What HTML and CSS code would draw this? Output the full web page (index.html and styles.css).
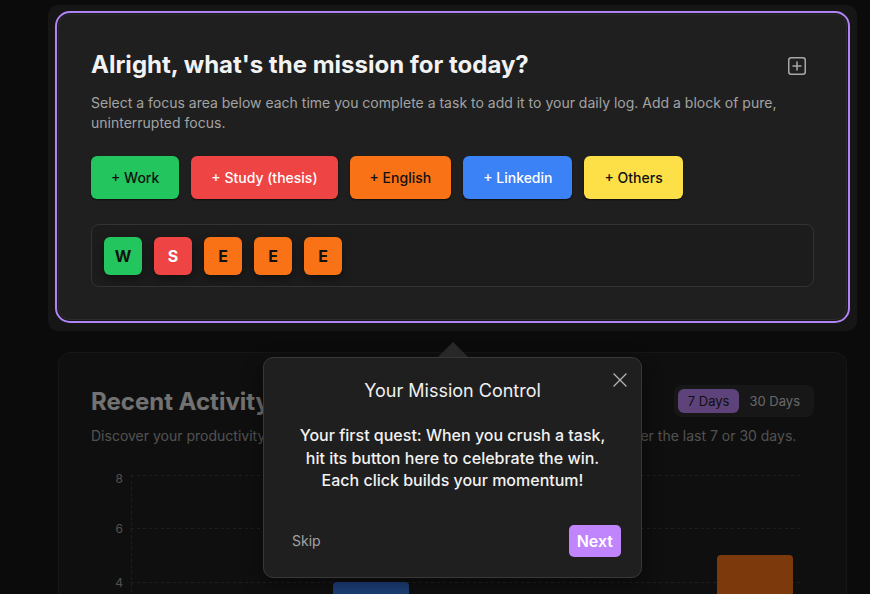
FILE: index.html
```html
<!DOCTYPE html>
<html lang="en">
<head>
<meta charset="utf-8">
<title>Focus Log</title>
<link rel="stylesheet" href="styles.css">
</head>
<body>
<main class="page">
  <div class="tour-stage">
    <section class="card mission">
      <header class="card-head">
        <h1 class="card-title">Alright, what's the mission for today?</h1>
        <button class="icon-btn" aria-label="Add focus block">
          <svg width="18" height="18" viewBox="0 0 18 18" fill="none" stroke="#a8a8a8" stroke-width="1.5" stroke-linecap="round">
            <rect x="0.75" y="0.75" width="16.5" height="16.5" rx="2.5"/>
            <path d="M9 5v8M5 9h8"/>
          </svg>
        </button>
      </header>
      <p class="card-desc">Select a focus area below each time you complete a task to add it to your daily log. Add a block of pure, uninterrupted focus.</p>
      <div class="focus-buttons">
        <button class="focus-btn green">+ Work</button>
        <button class="focus-btn red">+ Study (thesis)</button>
        <button class="focus-btn orange">+ English</button>
        <button class="focus-btn blue">+ Linkedin</button>
        <button class="focus-btn yellow">+ Others</button>
      </div>
      <div class="daily-log">
        <span class="chip green">W</span>
        <span class="chip red">S</span>
        <span class="chip orange">E</span>
        <span class="chip orange">E</span>
        <span class="chip orange">E</span>
      </div>
    </section>
  </div>

  <section class="card activity">
    <header class="card-head">
      <h2 class="card-title">Recent Activity</h2>
      <div class="range-toggle">
        <button class="range-btn active">7 Days</button>
        <button class="range-btn">30 Days</button>
      </div>
    </header>
    <p class="card-desc">Discover your productivity rhythm and see how your focus areas have added up over the last 7 or 30 days.</p>
    <svg class="chart" width="723" height="140" viewBox="0 0 723 140">
      <g class="grid" stroke="#3e3e3e" stroke-width="1" stroke-dasharray="3 3">
        <line x1="40" y1="9.5" x2="712" y2="9.5"/>
        <line x1="40" y1="62.5" x2="712" y2="62.5"/>
        <line x1="40" y1="116.5" x2="712" y2="116.5"/>
        <line x1="40.5" y1="9" x2="40.5" y2="140"/>
      </g>
      <g class="axis-labels" fill="#a3a3a3" font-size="12" text-anchor="end">
        <text x="32" y="17">8</text>
        <text x="32" y="67">6</text>
        <text x="32" y="121">4</text>
      </g>
      <path d="M242 120a4 4 0 0 1 4-4h68a4 4 0 0 1 4 4v20h-76z" fill="#3b82f6"/>
      <path d="M626 93a4 4 0 0 1 4-4h68a4 4 0 0 1 4 4v47h-76z" fill="#f97316"/>
    </svg>
  </section>

  <div class="tour-popover" role="dialog">
    <button class="popover-close" aria-label="Close">
      <svg width="14" height="14" viewBox="0 0 14 14" stroke="#b4b4b4" stroke-width="1.3" stroke-linecap="round">
        <path d="M1 1l12 12M13 1L1 13"/>
      </svg>
    </button>
    <h3 class="popover-title">Your Mission Control</h3>
    <p class="popover-body">Your first quest: When you crush a task, hit its button here to celebrate the win. Each click builds your momentum!</p>
    <footer class="popover-footer">
      <button class="popover-skip">Skip</button>
      <button class="popover-next">Next</button>
    </footer>
  </div>
</main>
</body>
</html>
```

FILE: styles.css
```css
* {
  box-sizing: border-box;
}

html,
body {
  margin: 0;
  background: #161616;
  height: 100%;
  overflow: hidden;
}

body {
  font-family: Inter, "Noto Sans", sans-serif;
  color: #f2f2f2;
}

button {
  font-family: inherit;
  cursor: pointer;
}

.page {
  position: relative;
  padding: 14px 23px 0 58px;
  display: flex;
  flex-direction: column;
  gap: 32px;
}

/* highlighted step: everything outside it is dimmed */
.tour-stage {
  position: relative;
  z-index: 10;
  margin: -9px -10px -11px;
  padding: 9px 10px 11px;
  border-radius: 10px;
  box-shadow: 0 0 0 3000px rgba(0, 0, 0, 0.5);
}

.card {
  background: #1f1f1f;
  border: 1px solid #2c2c2c;
  border-radius: 12px;
  padding: 34px 32px 32px;
}

.mission {
  outline: 2px solid #b084f5;
  outline-offset: 1px;
}

.card-head {
  display: flex;
  justify-content: space-between;
  align-items: flex-start;
}

.card-title {
  margin: 0;
  font-size: 24px;
  line-height: 32px;
  font-weight: 700;
  color: #f2f2f2;
}

.icon-btn {
  background: none;
  border: none;
  padding: 8px;
  display: flex;
}

.card-desc {
  margin: 10px 0 0;
  font-size: 14px;
  line-height: 20px;
  color: #a3a3a3;
}

.focus-buttons {
  display: flex;
  gap: 12px;
  margin-top: 23px;
}

.focus-btn {
  height: 43px;
  padding: 0 20px;
  border: none;
  border-radius: 6px;
  font-size: 14px;
  font-weight: 500;
  box-shadow: 0 1px 2px rgba(0, 0, 0, 0.6);
}

.green { background: #22c55e; color: #111; }
.red { background: #ef4444; color: #fff; }
.orange { background: #f97316; color: #111; }
.blue { background: #3b82f6; color: #fff; }
.yellow { background: #fde047; color: #111; }

.daily-log {
  margin-top: 25px;
  display: flex;
  gap: 12px;
  padding: 12px 12px 11px;
  border: 1px solid #333;
  border-radius: 8px;
  background: #1c1c1c;
}

.chip {
  width: 38px;
  height: 38px;
  border-radius: 6px;
  display: flex;
  align-items: center;
  justify-content: center;
  font-size: 16px;
  font-weight: 700;
  box-shadow: 0 4px 8px rgba(0, 0, 0, 0.4);
}

/* recent activity */
.activity {
  padding-top: 33px;
}

.activity .card-title {
  color: #e4e4e4;
}

.activity .card-desc {
  margin-top: 8px;
}

.range-toggle {
  display: flex;
  padding: 4px;
  margin-top: -1px;
  background: #2f2f2f;
  border-radius: 8px;
}

.range-btn {
  height: 24px;
  padding: 0 10px;
  border: none;
  border-radius: 6px;
  background: none;
  font-size: 13px;
  color: #cfcfcf;
}

.range-btn.active {
  background: #bb86f5;
  color: #222;
}

.chart {
  display: block;
  margin-top: 20px;
  font-family: Inter, sans-serif;
}

/* tour popover */
.tour-popover {
  position: absolute;
  z-index: 20;
  left: 263px;
  top: 357px;
  width: 379px;
  padding: 20px;
  background: #1f1f1f;
  border: 1px solid #383838;
  border-radius: 10px;
  box-shadow: 0 6px 20px rgba(0, 0, 0, 0.45);
}

.tour-popover::before {
  content: "";
  position: absolute;
  left: 50%;
  top: -16px;
  margin-left: -15px;
  border-left: 15px solid transparent;
  border-right: 15px solid transparent;
  border-bottom: 15px solid #282828;
}

.popover-close {
  position: absolute;
  top: 15px;
  right: 14px;
  padding: 0;
  border: none;
  background: none;
  display: flex;
}

.popover-title {
  margin: 0;
  text-align: center;
  font-size: 18px;
  line-height: 26px;
  font-weight: 400;
  color: #f0f0f0;
}

.popover-body {
  margin: 20px 0 0;
  padding: 0 12px;
  text-align: center;
  font-size: 16px;
  line-height: 22.5px;
  font-weight: 500;
  color: #f2f2f2;
}

.popover-footer {
  display: flex;
  justify-content: space-between;
  align-items: center;
  margin-top: 33px;
}

.popover-skip {
  background: none;
  border: none;
  padding: 6px 8px;
  font-size: 14px;
  color: #a3a3a3;
}

.popover-next {
  height: 32px;
  padding: 0 8px;
  border: none;
  border-radius: 5px;
  background: #c084fc;
  color: #fff;
  font-size: 16px;
  font-weight: 600;
}
```
